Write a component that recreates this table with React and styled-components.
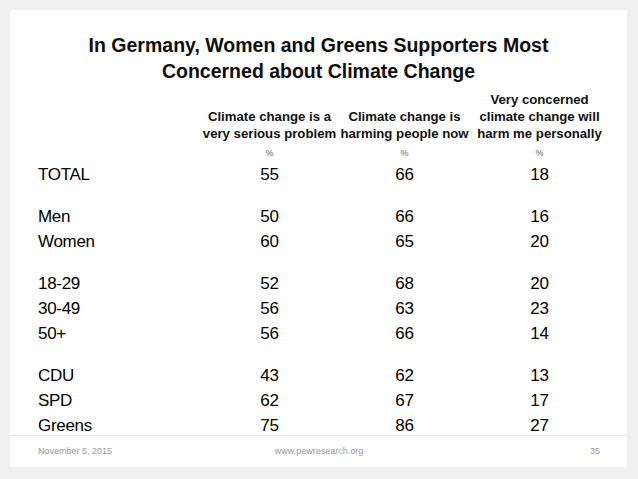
import React from "react";
import styled, { createGlobalStyle } from "styled-components";

const GlobalStyle = createGlobalStyle`
  html, body {
    margin: 0;
    padding: 0;
    background: #f0f0f0;
  }
`;

const columns = [
  ["Climate change is a", "very serious problem"],
  ["Climate change is", "harming people now"],
  ["Very concerned", "climate change will", "harm me personally"],
];

const groups = [
  [["TOTAL", 55, 66, 18]],
  [
    ["Men", 50, 66, 16],
    ["Women", 60, 65, 20],
  ],
  [
    ["18-29", 52, 68, 20],
    ["30-49", 56, 63, 23],
    ["50+", 56, 66, 14],
  ],
  [
    ["CDU", 43, 62, 13],
    ["SPD", 62, 67, 17],
    ["Greens", 75, 86, 27],
  ],
];

const App = () => {
  return (
    <>
      <GlobalStyle />
      <Slide>
        <Title>
          In Germany, Women and Greens Supporters Most
          <br />
          Concerned about Climate Change
        </Title>
        <HeadRow>
          <span />
          {columns.map((lines, i) => (
            <HeadCell key={i}>
              {lines.map((l) => (
                <div key={l}>{l}</div>
              ))}
            </HeadCell>
          ))}
        </HeadRow>
        <PctRow>
          <span />
          <Pct>%</Pct>
          <Pct>%</Pct>
          <Pct>%</Pct>
        </PctRow>
        <Body>
          {groups.map((group, gi) => (
            <Group key={gi}>
              {group.map((row) => (
                <Row key={row[0]}>
                  <Label>{row[0]}</Label>
                  <Num>{row[1]}</Num>
                  <Num>{row[2]}</Num>
                  <Num>{row[3]}</Num>
                </Row>
              ))}
            </Group>
          ))}
        </Body>
        <Footer>
          <FootText>November 5, 2015</FootText>
          <FootText align="center">www.pewresearch.org</FootText>
          <FootText align="right">35</FootText>
        </Footer>
      </Slide>
    </>
  );
};

const Slide = styled.div`
  margin: 10px;
  width: 617px;
  height: 457px;
  background: #ffffff;
  display: flex;
  flex-direction: column;
  font-family: "Liberation Sans", Arial, sans-serif;
  color: #000;
`;

const Title = styled.h1`
  margin: 0;
  padding-top: 22px;
  font-size: 19.5px;
  line-height: 26px;
  font-weight: 700;
  text-align: center;
  color: #0d0d0d;
`;

const Grid = styled.div`
  display: grid;
  grid-template-columns: 164px 135px 135px 135px;
  padding-left: 28px;
`;

const HeadRow = styled(Grid)`
  align-items: end;
  margin-top: 7px;
`;

const HeadCell = styled.div`
  font-size: 13.2px;
  font-weight: 700;
  line-height: 17px;
  text-align: center;
  white-space: nowrap;
  color: #111;
`;

const PctRow = styled(Grid)`
  margin-top: 5px;
`;

const Pct = styled.div`
  font-size: 9px;
  line-height: 12px;
  text-align: center;
  color: #666;
`;

const Body = styled.div`
  display: flex;
  flex-direction: column;
  gap: 17px;
  margin-top: 3px;
  margin-bottom: -3px;
`;

const Group = styled.div`
  display: flex;
  flex-direction: column;
`;

const Row = styled(Grid)`
  height: 25px;
  align-items: center;
  font-size: 17px;
  letter-spacing: -0.3px;
`;

const Label = styled.div`
  white-space: nowrap;
`;

const Num = styled.div`
  text-align: center;
`;

const Footer = styled.div`
  margin-top: auto;
  height: 33px;
  box-sizing: border-box;
  border-top: 1px solid #e8e8e8;
  display: grid;
  grid-template-columns: 1fr 1fr 1fr;
  align-items: start;
  padding: 10px 27px 0 28px;
`;

const FootText = styled.div`
  font-size: 9px;
  line-height: 10px;
  color: #999;
  text-align: ${(p) => p.align || "left"};
`;

export default App;
